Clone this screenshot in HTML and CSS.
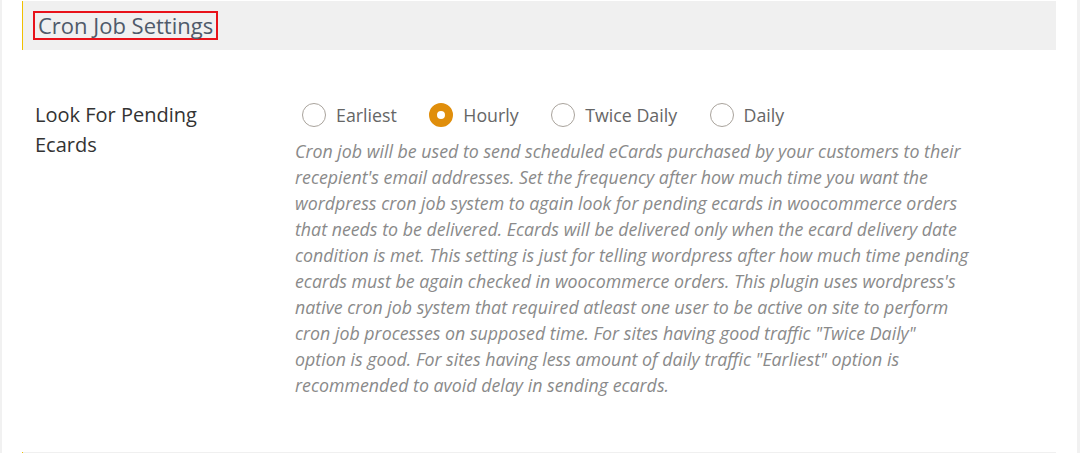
FILE: index.html
```html
<!DOCTYPE html>
<html lang="en">
<head>
  <meta charset="UTF-8" />
  <meta name="viewport" content="width=device-width, initial-scale=1.0" />
  <title>Cron Job Settings</title>
  <link rel="stylesheet" href="styles.css">
</head>
<body>
  <div class="panel">
    <div class="section-head">
      <h2 class="section-title">Cron Job Settings</h2>
    </div>

    <div class="setting-row">
      <div class="setting-label">Look For Pending Ecards</div>
      <div class="setting-field">
        <div class="radio-group">
          <label class="radio"><span class="radio-dot"></span>Earliest</label>
          <label class="radio checked"><span class="radio-dot"></span>Hourly</label>
          <label class="radio"><span class="radio-dot"></span>Twice Daily</label>
          <label class="radio"><span class="radio-dot"></span>Daily</label>
        </div>
        <p class="description">Cron job will be used to send scheduled eCards purchased by your customers to their recepient's email addresses. Set the frequency after how much time you want the wordpress cron job system to again look for pending ecards in woocommerce orders that needs to be delivered. Ecards will be delivered only when the ecard delivery date condition is met. This setting is just for telling wordpress after how much time pending ecards must be again checked in woocommerce orders. This plugin uses wordpress's native cron job system that required atleast one user to be active on site to perform cron job processes on supposed time. For sites having good traffic "Twice Daily" option is good. For sites having less amount of daily traffic "Earliest" option is recommended to avoid delay in sending ecards.</p>
      </div>
    </div>

    <div class="section-head next"></div>
  </div>
</body>
</html>
```

FILE: styles.css
```css
body {
  margin: 0;
  background-color: #f1f1f1;
  font-family: 'Open Sans', 'Liberation Sans', sans-serif;
  height: 453px;
  overflow: hidden;
}
.panel {
  background-color: #fff;
  margin: 0 3px 0 2px;
  padding: 1px 21px 0 20px;
  height: 100%;
  box-sizing: border-box;
}
.section-head {
  background-color: #f0f0f0;
  border-left: 1px solid #f0c000;
  height: 49px;
  padding: 10px 0 0 10px;
  box-sizing: border-box;
}
.section-head.next {
  height: 10px;
  margin-top: 54px;
}
.section-title {
  display: inline-block;
  margin: 0;
  border: 2px solid #e8121a;
  padding: 0 3px 0 3px;
  font-size: 22px;
  font-weight: normal;
  line-height: 25px;
  color: #4f5a6a;
}
.setting-row {
  display: flex;
  padding: 50px 0 0 13px;
}
.setting-label {
  width: 200px;
  margin-right: 60px;
  flex-shrink: 0;
  font-size: 20px;
  line-height: 30px;
  color: #333;
}
.setting-field {
  width: 674px;
}
.radio-group {
  display: flex;
  align-items: center;
  height: 30px;
  padding-left: 7px;
}
.radio {
  display: flex;
  align-items: center;
  font-size: 17.8px;
  color: #666;
  margin-right: 32.5px;
}
.radio-dot {
  width: 24px;
  height: 24px;
  box-sizing: border-box;
  border: 1.5px solid #a9a39c;
  border-radius: 50%;
  margin-right: 10px;
}
.radio.checked .radio-dot {
  border: 8px solid #e08e0b;
  background-color: #fff;
}
.description {
  margin: 8px 0 0;
  font-size: 17.8px;
  font-style: italic;
  line-height: 26px;
  color: #8a8a8a;
}
```
